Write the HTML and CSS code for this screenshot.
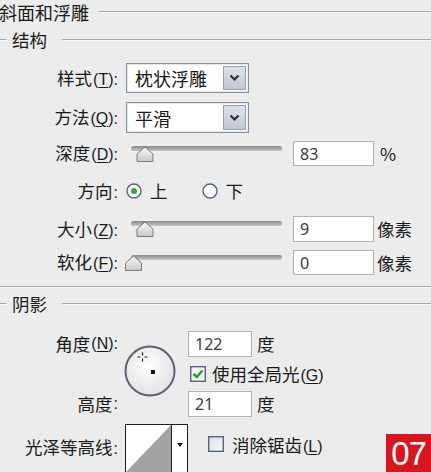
FILE: index.html
```html
<!DOCTYPE html>
<html lang="zh-CN">
<head>
    <meta charset="UTF-8">
    <meta name="viewport" content="width=device-width, initial-scale=1.0">
    <title>斜面和浮雕</title>
    <link rel="stylesheet" href="styles.css">
</head>
<body>
    <div class="panel">
        <div class="legend legend-main"><span class="legend-text">斜面和浮雕</span></div>
        <div class="legend legend-sub"><span class="legend-text">结构</span></div>

        <div class="row row-style">
            <span class="label">样式<span class="key">(<u>T</u>):</span></span>
            <div class="select">
                <span class="select-value">枕状浮雕</span>
                <span class="select-btn">
                    <svg width="11" height="8" viewBox="0 0 11 8"><path d="M1.5 1.5 L5.5 5.5 L9.5 1.5" fill="none" stroke="#2b2f38" stroke-width="2.2"/></svg>
                </span>
            </div>
        </div>

        <div class="row row-method">
            <span class="label">方法<span class="key">(<u>Q</u>):</span></span>
            <div class="select">
                <span class="select-value">平滑</span>
                <span class="select-btn">
                    <svg width="11" height="8" viewBox="0 0 11 8"><path d="M1.5 1.5 L5.5 5.5 L9.5 1.5" fill="none" stroke="#2b2f38" stroke-width="2.2"/></svg>
                </span>
            </div>
        </div>

        <div class="row row-depth">
            <span class="label">深度<span class="key">(<u>D</u>):</span></span>
            <svg class="slider" width="160" height="23" viewBox="0 0 160 23">
                <defs>
                    <linearGradient id="trk" x1="0" y1="0" x2="0" y2="1">
                        <stop offset="0" stop-color="#8a8a8a"/>
                        <stop offset="1" stop-color="#c6c6c6"/>
                    </linearGradient>
                    <linearGradient id="thb" x1="0" y1="0" x2="0" y2="1">
                        <stop offset="0" stop-color="#f7f7f7"/>
                        <stop offset="1" stop-color="#c9c9c9"/>
                    </linearGradient>
                </defs>
                <rect x="7" y="5" width="151" height="5" rx="2.5" fill="url(#trk)"/>
                <path d="M13 20.5 L13 13 L21 6 L29 13 L29 20.5 Z" fill="url(#thb)" stroke="#7d7d7d" stroke-linejoin="round"/>
            </svg>
            <span class="field">83</span>
            <span class="unit">%</span>
        </div>

        <div class="row row-direction">
            <span class="label">方向<span class="key">:</span></span>
            <svg class="radio" width="16" height="16" viewBox="0 0 16 16">
                <circle cx="8" cy="8" r="7" fill="#fbfbfb" stroke="#4f6788" stroke-width="1.4"/>
                <circle cx="8" cy="8" r="3" fill="#35a93a"/>
            </svg>
            <span class="radio-text">上</span>
            <svg class="radio radio-second" width="16" height="16" viewBox="0 0 16 16">
                <circle cx="8" cy="8" r="7" fill="#fbfbfb" stroke="#4f6788" stroke-width="1.4"/>
            </svg>
            <span class="radio-text">下</span>
        </div>

        <div class="row row-size">
            <span class="label">大小<span class="key">(<u>Z</u>):</span></span>
            <svg class="slider" width="160" height="23" viewBox="0 0 160 23">
                <rect x="7" y="5" width="151" height="5" rx="2.5" fill="url(#trk)"/>
                <path d="M13 20.5 L13 13 L21 6 L29 13 L29 20.5 Z" fill="url(#thb)" stroke="#7d7d7d" stroke-linejoin="round"/>
            </svg>
            <span class="field">9</span>
            <span class="unit unit-px">像素</span>
        </div>

        <div class="row row-soften">
            <span class="label">软化<span class="key">(<u>F</u>):</span></span>
            <svg class="slider" width="160" height="23" viewBox="0 0 160 23">
                <rect x="7" y="5" width="151" height="5" rx="2.5" fill="url(#trk)"/>
                <path d="M1.5 20.5 L1.5 13 L9.5 6 L17.5 13 L17.5 20.5 Z" fill="url(#thb)" stroke="#7d7d7d" stroke-linejoin="round"/>
            </svg>
            <span class="field">0</span>
            <span class="unit unit-px">像素</span>
        </div>

        <div class="divider"></div>
        <div class="legend legend-sub legend-shadow"><span class="legend-text">阴影</span></div>

        <div class="shadow-grid">
            <span class="label label-angle">角度<span class="key">(<u>N</u>):</span></span>
            <svg class="dial" width="52" height="52" viewBox="0 0 52 52">
                <defs>
                    <radialGradient id="dialbg" cx="0.45" cy="0.4" r="0.6">
                        <stop offset="0" stop-color="#ffffff"/>
                        <stop offset="1" stop-color="#e2e2e2"/>
                    </radialGradient>
                </defs>
                <circle cx="26" cy="26" r="24.5" fill="url(#dialbg)" stroke="#5a6476" stroke-width="2"/>
                <path d="M18.5 7.5 V10.5 M18.5 13.5 V16.5 M13.5 12 H16.5 M20.5 12 H23.5" stroke="#1a1a1a" stroke-width="1.2"/>
                <rect x="27" y="25" width="4" height="4" fill="#111"/>
            </svg>
            <div class="cell cell-angle">
                <span class="field field-short">122</span>
                <span class="unit">度</span>
            </div>
            <div class="cell cell-global">
                <svg class="check" width="16" height="16" viewBox="0 0 16 16">
                    <rect x="0.7" y="0.7" width="14.6" height="14.6" fill="#f2f4f6" stroke="#56657d" stroke-width="1.4"/>
                    <path d="M3.5 8 L6.8 11 L12.5 4.5" fill="none" stroke="#2f9e33" stroke-width="2.6"/>
                </svg>
                <span class="check-text">使用全局光<span class="key">(<u>G</u>)</span></span>
            </div>
            <span class="label label-altitude">高度<span class="key">:</span></span>
            <div class="cell cell-altitude">
                <span class="field field-short">21</span>
                <span class="unit">度</span>
            </div>
        </div>

        <div class="row row-contour">
            <span class="label">光泽等高线<span class="key">:</span></span>
            <svg class="contour" width="63" height="48" viewBox="0 0 63 48">
                <rect x="0.5" y="0.5" width="62" height="50" fill="#fff" stroke="#1e1e1e"/>
                <polygon points="1,48 46,1 46,48" fill="#a3a3a3"/>
                <line x1="46.5" y1="0" x2="46.5" y2="48" stroke="#1e1e1e"/>
                <polygon points="52,19 58,19 55,23" fill="#111"/>
            </svg>
            <svg class="check check-aa" width="16" height="16" viewBox="0 0 16 16">
                <defs>
                    <linearGradient id="chk" x1="0" y1="0" x2="1" y2="1">
                        <stop offset="0" stop-color="#d6dbe2"/>
                        <stop offset="1" stop-color="#fafbfc"/>
                    </linearGradient>
                </defs>
                <rect x="0.7" y="0.7" width="14.6" height="14.6" fill="url(#chk)" stroke="#56657d" stroke-width="1.4"/>
            </svg>
            <span class="check-text">消除锯齿<span class="key">(<u>L</u>)</span></span>
            <span class="badge">07</span>
        </div>
    </div>
</body>
</html>
```

FILE: styles.css
```css
html, body {
    height: 472px;
    overflow: hidden;
}

body {
    margin: 0;
    background-color: #ececec;
    font-family: "Noto Sans CJK SC", "Noto Sans", sans-serif;
    font-size: 17.5px;
    line-height: 1;
    color: #1a1a1a;
}

u {
    text-decoration-thickness: 1px;
    text-underline-offset: 2px;
}

/* shortcut letters and colons use a latin face */
.key {
    font-family: "Liberation Sans", sans-serif;
    font-size: 16px;
    margin-left: 1px;
}

.legend {
    display: flex;
    align-items: center;
    height: 24px;
}

.legend::after {
    content: "";
    flex: 1;
    border-top: 1px solid #a6a6a6;
    border-bottom: 1px solid #fafafa;
}

.legend-main .legend-text {
    margin-left: -1px;
    font-size: 18px;
}

.legend-main::after {
    margin-left: 10px;
}

.legend-sub {
    margin-top: 4px;
}

.legend-sub::before {
    content: "";
    width: 6px;
    margin-right: 6px;
    border-top: 1px solid #a6a6a6;
    border-bottom: 1px solid #fafafa;
}

.legend-sub::after {
    margin-left: 15px;
}

.row {
    display: flex;
    align-items: center;
}

.label {
    width: 118px;
    flex-shrink: 0;
    text-align: right;
}

.row-style {
    margin-top: 11px;
    height: 30px;
}

.row-method {
    margin-top: 9px;
    height: 31px;
}

.row-depth {
    margin-top: 8px;
    height: 25px;
}

.row-direction {
    margin-top: 13px;
    height: 24px;
}

.row-size {
    margin-top: 13px;
    height: 26px;
}

.row-soften {
    margin-top: 8px;
    height: 25px;
}

.select {
    display: flex;
    box-sizing: border-box;
    width: 123px;
    height: 100%;
    margin-left: 8px;
    border: 1px solid #8793a3;
    background-color: #ffffff;
    box-shadow: inset 0 0 0 1px #e3e7ec;
}

.select-value {
    flex: 1;
    display: flex;
    align-items: center;
    padding-left: 8px;
    font-size: 18px;
}

.select-btn {
    display: flex;
    align-items: center;
    justify-content: center;
    width: 21px;
    margin: 2px;
    border: 1px solid #98a1b1;
    background: linear-gradient(#dde1e9, #c2c7d3);
}

.slider {
    align-self: flex-start;
    margin-left: 6px;
    flex-shrink: 0;
}

.field {
    display: flex;
    align-items: center;
    box-sizing: border-box;
    width: 81px;
    height: 100%;
    margin-left: 9px;
    padding-left: 6px;
    border: 1px solid #b3b3b3;
    background-color: #ffffff;
    font-family: "Noto Sans", sans-serif;
    font-size: 16px;
    color: #3a3a3a;
}

.unit {
    margin-left: 6px;
}

.unit-px {
    margin-left: 3px;
}

.radio {
    margin-left: 8px;
}

.radio-second {
    margin-left: 34px;
}

.radio-text {
    margin-left: 8px;
}

.divider {
    margin-top: 11px;
    border-top: 1px solid #a6a6a6;
    border-bottom: 1px solid #fafafa;
}

.shadow-grid {
    display: grid;
    grid-template-columns: 118px 70px auto;
    grid-template-rows: 26px 34px 26px;
    margin-top: 15px;
}

.shadow-grid .label {
    display: flex;
    align-items: center;
    justify-content: flex-end;
}

.label-angle {
    grid-column: 1;
    grid-row: 1;
}

.label-altitude {
    grid-column: 1;
    grid-row: 3;
}

.dial {
    grid-column: 2;
    grid-row: 1 / 4;
    align-self: start;
    margin-top: 14px;
    margin-left: 6px;
}

.cell {
    display: flex;
    align-items: center;
    grid-column: 3;
}

.cell-angle {
    grid-row: 1;
}

.cell-global {
    grid-row: 2;
}

.cell-altitude {
    grid-row: 3;
}

.field-short {
    width: 64px;
    margin-left: 0;
}

.cell .unit {
    margin-left: 5px;
}

.check {
    margin-left: 2px;
    flex-shrink: 0;
}

.check-text {
    margin-left: 6px;
}

.row-contour {
    margin-top: 7px;
    height: 48px;
    align-items: flex-start;
}

.row-contour .label {
    margin-top: 14px;
}

.contour {
    margin-left: 7px;
    flex-shrink: 0;
}

.check-aa {
    margin-left: 20px;
    margin-top: 12px;
}

.row-contour .check-text {
    margin-top: 12px;
    margin-left: 8px;
}

.badge {
    align-self: flex-end;
    margin-left: auto;
    width: 45px;
    height: 38px;
    display: flex;
    align-items: center;
    justify-content: center;
    background-color: #d8161f;
    color: #ffffff;
    font-family: "Liberation Sans", sans-serif;
    font-size: 33px;
    letter-spacing: -1px;
}
```
